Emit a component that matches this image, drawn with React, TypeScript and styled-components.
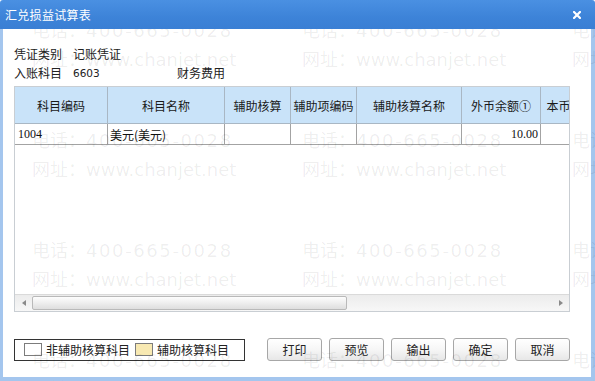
import React from 'react';
import styled, { createGlobalStyle } from 'styled-components';

const Global = createGlobalStyle`
  html, body { margin: 0; padding: 0; background: #fff; }
  body {
    width: 595px; height: 381px; overflow: hidden;
    font-family: "Noto Sans CJK SC", "Liberation Sans", sans-serif;
    font-size: 12px; color: #222;
  }
`;

const Window = styled.div`
  position: relative;
  width: 595px;
  height: 381px;
  display: flex;
  flex-direction: column;
  overflow: hidden;
  background: #fff;
`;

const TitleBar = styled.div`
  position: relative;
  z-index: 2;
  height: 29px;
  flex: none;
  display: flex;
  align-items: center;
  justify-content: space-between;
  padding: 0 14px 0 5px;
  background: linear-gradient(to bottom, #4a90e2 0%, #3d83d8 60%, #3a7fd4 100%);
  border-radius: 3px 3px 0 0;
  color: #fff;
  font-size: 12px;
  letter-spacing: 0.3px;
`;

const Frame = styled.div`
  flex: 1;
  display: flex;
  flex-direction: column;
  padding: 15px 21px 0 11px;
  border-style: solid;
  border-color: #a4c6ee;
  border-width: 0 4px 4px 3px;
  background: #fff;
`;

const InfoRow = styled.div`
  height: 19px;
  display: flex;
  align-items: center;
  white-space: nowrap;
`;

const Label = styled.span<{ $w: number }>`
  width: ${p => p.$w}px;
  flex: none;
`;

const Code = styled.span<{ $w: number }>`
  width: ${p => p.$w}px;
  flex: none;
  font-family: "DejaVu Sans", sans-serif;
  font-size: 10.5px;
`;

const Grid = styled.div`
  margin-top: 4px;
  width: 556px;
  height: 226px;
  box-sizing: border-box;
  border: 1px solid #c9ced3;
  display: flex;
  flex-direction: column;
  overflow: hidden;
`;

const Table = styled.div`
  flex: 1;
  overflow: hidden;
  display: grid;
  grid-template-columns: 93px 117px 66px 66px 105px 79px 60px;
  grid-template-rows: 37px 21px;
  align-content: start;
`;

const HeadCell = styled.div`
  box-sizing: border-box;
  background: #c9e3f9;
  border-right: 1px solid #a9b7c4;
  border-bottom: 1px solid #a9b7c4;
  display: flex;
  align-items: center;
  justify-content: center;
  white-space: nowrap;
  overflow: hidden;
  color: #1a1a1a;
`;

const Cell = styled.div<{ $align?: 'left' | 'right'; $cjk?: boolean }>`
  box-sizing: border-box;
  border-right: 1px solid #a3a3a3;
  border-bottom: 1px solid #a3a3a3;
  display: flex;
  align-items: center;
  justify-content: ${p => (p.$align === 'right' ? 'flex-end' : 'flex-start')};
  padding: 0 2px 0 ${p => (p.$cjk ? 2 : 3)}px;
  white-space: nowrap;
  overflow: hidden;
  font-family: ${p => (p.$cjk ? '"Noto Sans CJK SC", sans-serif' : '"Liberation Serif", serif')};
  font-size: 12px;
  color: #111;
`;

const HScroll = styled.div`
  height: 16px;
  flex: none;
  display: flex;
  align-items: stretch;
  background: linear-gradient(to bottom, #ececec, #f7f7f7);
  border-top: 1px solid #dadada;
`;

const ArrowBtn = styled.div`
  width: 17px;
  flex: none;
  display: flex;
  align-items: center;
  justify-content: center;
`;

const Track = styled.div`
  flex: 1;
  display: flex;
  align-items: stretch;
  padding: 1px 0;
`;

const Thumb = styled.div`
  width: 315px;
  box-sizing: border-box;
  border: 1px solid #b9b9b9;
  border-radius: 2px;
  background: linear-gradient(to bottom, #fdfdfd 0%, #eeeeee 50%, #dedede 100%);
`;

const Footer = styled.div`
  margin-top: 26px;
  height: 23px;
  display: flex;
  align-items: center;
`;

const Legend = styled.div`
  width: 231px;
  height: 22px;
  box-sizing: border-box;
  border: 1px solid #333;
  display: flex;
  align-items: center;
  padding-left: 9px;
  white-space: nowrap;
`;

const Swatch = styled.span<{ $color: string }>`
  width: 18px;
  height: 13px;
  box-sizing: border-box;
  border: 1px solid #7c7c7c;
  background: ${p => p.$color};
  margin-right: 4px;
  flex: none;
`;

const LegendText = styled.span`
  margin-right: 5px;
`;

const Buttons = styled.div`
  margin-left: 22px;
  display: flex;
  gap: 7px;
`;

const Button = styled.button`
  width: 55px;
  height: 23px;
  padding: 0;
  box-sizing: border-box;
  border: 1px solid #a7a7a7;
  border-radius: 3px;
  background: linear-gradient(to bottom, #ffffff 0%, #f6f6f6 50%, #e7e7e7 100%);
  font-family: "Noto Sans CJK SC", sans-serif;
  font-size: 12px;
  color: #222;
`;

const Watermark = styled.div`
  position: absolute;
  inset: 0;
  z-index: 1;
  pointer-events: none;
  display: grid;
  grid-template-columns: repeat(3, 270px);
  grid-auto-rows: 110px;
  padding: 15px 0 0 32px;
  color: rgba(0, 0, 0, 0.07);
  overflow: hidden;
`;

const WmTile = styled.div`
  display: flex;
  flex-direction: column;
  white-space: nowrap;
`;

const WmLine = styled.div`
  height: 29px;
  line-height: 29px;
  font-size: 18px;
  font-family: "Noto Sans CJK SC", sans-serif;
`;

const WmLatin = styled.span<{ $ls: number }>`
  font-family: "DejaVu Sans", sans-serif;
  letter-spacing: ${p => p.$ls}px;
`;

const columns = ['科目编码', '科目名称', '辅助核算', '辅助项编码', '辅助核算名称', '外币余额①', '本币余额'];

export default function App() {
  const tiles = Array.from({ length: 12 });
  return (
    <>
      <Global />
      <Window>
        <TitleBar>
          <span>汇兑损益试算表</span>
          <svg width="8" height="8" viewBox="0 0 8 8">
            <path d="M1 1 L7 7 M7 1 L1 7" stroke="#fff" strokeWidth="2.2" strokeLinecap="square" />
          </svg>
        </TitleBar>
        <Frame>
          <InfoRow>
            <Label $w={59}>凭证类别</Label>
            <span>记账凭证</span>
          </InfoRow>
          <InfoRow>
            <Label $w={59}>入账科目</Label>
            <Code $w={104}>6603</Code>
            <span>财务费用</span>
          </InfoRow>
          <Grid>
            <Table>
              {columns.map(c => (
                <HeadCell key={c}>{c}</HeadCell>
              ))}
              <Cell>1004</Cell>
              <Cell $cjk>美元(美元)</Cell>
              <Cell />
              <Cell />
              <Cell />
              <Cell $align="right">10.00</Cell>
              <Cell />
            </Table>
            <HScroll>
              <ArrowBtn>
                <svg width="4" height="6" viewBox="0 0 4 6"><path d="M4 0 L0 3 L4 6 Z" fill="#8a8a8a" /></svg>
              </ArrowBtn>
              <Track>
                <Thumb />
              </Track>
              <ArrowBtn>
                <svg width="4" height="6" viewBox="0 0 4 6"><path d="M0 0 L4 3 L0 6 Z" fill="#8a8a8a" /></svg>
              </ArrowBtn>
            </HScroll>
          </Grid>
          <Footer>
            <Legend>
              <Swatch $color="#ffffff" />
              <LegendText>非辅助核算科目</LegendText>
              <Swatch $color="#f8e9b2" />
              <LegendText>辅助核算科目</LegendText>
            </Legend>
            <Buttons>
              <Button>打印</Button>
              <Button>预览</Button>
              <Button>输出</Button>
              <Button>确定</Button>
              <Button>取消</Button>
            </Buttons>
          </Footer>
        </Frame>
        <Watermark>
          {tiles.map((_, i) => (
            <WmTile key={i}>
              <WmLine>电话：<WmLatin $ls={1.6}>400-665-0028</WmLatin></WmLine>
              <WmLine>网址：<WmLatin $ls={0}>www.chanjet.net</WmLatin></WmLine>
            </WmTile>
          ))}
        </Watermark>
      </Window>
    </>
  );
}
